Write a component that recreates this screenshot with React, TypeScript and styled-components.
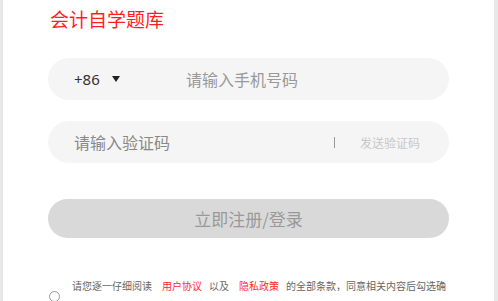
import React from "react";
import styled, { createGlobalStyle } from "styled-components";

const GlobalStyle = createGlobalStyle`
    html, body {
        margin: 0;
        padding: 0;
        background: #e8e8e8;
        font-family: "Noto Sans", "Noto Sans CJK SC", sans-serif;
        overflow: hidden;
    }
`

const Frame = styled.div`
    margin: 0 4px 0 3px;
    height: 301px;
    background: #ffffff;
    overflow: hidden;
`

const Content = styled.div`
    padding: 5px 45px 0 45px;
    display: flex;
    flex-direction: column;
`

const Title = styled.h1`
    margin: 0 0 0 2px;
    font-size: 19px;
    line-height: 28px;
    font-weight: 400;
    color: #ff1f1f;
    font-family: "Noto Sans CJK SC", sans-serif;
`

const Field = styled.div<{ $top: number }>`
    margin-top: ${(p) => p.$top}px;
    height: 42px;
    border-radius: 21px;
    background: #f5f5f5;
    display: flex;
    align-items: center;
    padding: 0 29px 0 26px;
    box-sizing: border-box;
`

const CountryCode = styled.div`
    display: flex;
    align-items: center;
    width: 112px;
    font-size: 15px;
    color: #333;
    font-family: "Noto Sans", sans-serif;
`

const Arrow = styled.span`
    margin-left: 12px;
    width: 0;
    height: 0;
    border-left: 4.5px solid transparent;
    border-right: 4.5px solid transparent;
    border-top: 6px solid #222;
`

const Placeholder = styled.span<{ $color: string }>`
    flex: 1;
    font-size: 16px;
    color: ${(p) => p.$color};
    font-family: "Noto Sans CJK SC", sans-serif;
`

const Divider = styled.span`
    width: 1px;
    height: 11px;
    background: #999;
    margin-right: 25px;
`

const SendCode = styled.span`
    font-size: 12px;
    color: #c8c8c8;
    font-family: "Noto Sans CJK SC", sans-serif;
`

const SubmitButton = styled.button`
    margin-top: 36px;
    height: 39px;
    border: none;
    border-radius: 20px;
    background: #d9d9d9;
    color: #999;
    font-size: 17px;
    font-family: "Noto Sans CJK SC", sans-serif;
    padding: 0;
`

const Agreement = styled.div`
    margin-top: 38px;
    display: flex;
    align-items: center;
    padding-left: 1px;
`

const Radio = styled.span`
    width: 9px;
    height: 9px;
    border: 1px solid #999;
    border-radius: 50%;
    flex-shrink: 0;
    margin-right: 12px;
`

const AgreementText = styled.p`
    margin: 0;
    width: 382px;
    flex-shrink: 0;
    font-size: 10px;
    line-height: 20px;
    color: #666;
    font-family: "Noto Sans CJK SC", sans-serif;
`

const Link = styled.span`
    color: #ff2b2b;
    margin: 0 7px 0 10px;
`

const App = (): JSX.Element => {
    return (
        <>
            <GlobalStyle />
            <Frame>
                <Content>
                    <Title>会计自学题库</Title>
                    <Field $top={25}>
                        <CountryCode>
                            +86
                            <Arrow />
                        </CountryCode>
                        <Placeholder $color="#999">请输入手机号码</Placeholder>
                    </Field>
                    <Field $top={21}>
                        <Placeholder $color="#888">请输入验证码</Placeholder>
                        <Divider />
                        <SendCode>发送验证码</SendCode>
                    </Field>
                    <SubmitButton>立即注册/登录</SubmitButton>
                    <Agreement>
                        <Radio />
                        <AgreementText>
                            请您逐一仔细阅读<Link>用户协议</Link>以及<Link>隐私政策</Link>的全部条款，同意相关内容后勾选确认
                        </AgreementText>
                    </Agreement>
                </Content>
            </Frame>
        </>
    );
};

export default App;
